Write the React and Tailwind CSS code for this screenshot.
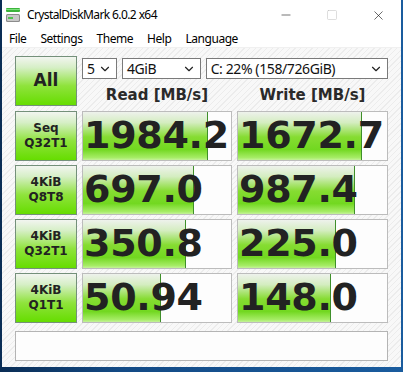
import React from 'react';
import { ChevronDown, Minus, Square, X } from 'lucide-react';

const rows = [
  { l1: 'Seq', l2: 'Q32T1', read: '1984.2', rw: 127, write: '1672.7', ww: 126 },
  { l1: '4KiB', l2: 'Q8T8', read: '697.0', rw: 113, write: '987.4', ww: 119 },
  { l1: '4KiB', l2: 'Q32T1', read: '350.8', rw: 105, write: '225.0', ww: 100 },
  { l1: '4KiB', l2: 'Q1T1', read: '50.94', rw: 80, write: '148.0', ww: 95 },
];

const ui = { fontFamily: '"Noto Sans", "Open Sans", sans-serif' };
const bold = { fontFamily: '"DejaVu Sans", Verdana, sans-serif' };

const btnBg =
  'bg-[linear-gradient(to_bottom,#f2f5f0_0%,#d6efc6_22%,#8fe33c_60%,#66dd00_100%)]';

const AppIcon = () => (
  <svg width="16" height="16" viewBox="0 0 16 16">
    <rect x="1" y="1" width="14" height="4" rx="1" fill="#3cb43c" />
    <rect x="1" y="2" width="14" height="1" fill="#7ee07e" />
    <rect x="1" y="7" width="14" height="8" rx="1.5" fill="#8c8c8c" />
    <rect x="2" y="8" width="12" height="6" rx="1" fill="#c8c8c8" />
    <rect x="3" y="10" width="5" height="2" fill="#4ec24e" />
  </svg>
);

const Select = ({ text, className }) => (
  <div
    className={`flex items-center justify-between h-[21px] border border-[#7a7a7a] bg-white pl-[4px] pr-[4px] text-[14px] tracking-[-0.4px] text-[#111] ${className}`}
    style={ui}
  >
    <span className="leading-none">{text}</span>
    <ChevronDown size={14} strokeWidth={2} color="#222" />
  </div>
);

const TestButton = ({ l1, l2 }) => (
  <div
    className={`flex flex-col items-center justify-center border border-[#74907a] ${btnBg} text-[12px] font-bold leading-[15px] text-[#222]`}
    style={bold}
  >
    <span>{l1}</span>
    <span>{l2}</span>
  </div>
);

const ValueBox = ({ value, width }) => (
  <div className="relative h-[50px] overflow-hidden border border-[#bcbcbc] bg-[#fdfdfd]">
    <div
      className="absolute left-0 top-0 bottom-0 border-r border-[#3f8f2a] bg-[linear-gradient(to_bottom,#eef2ec_0%,#d4edc0_22%,#86dc32_52%,#72d820_78%,#a6ec66_95%,#c4f29a_100%)]"
      style={{ width: width - 2 }}
    />
    <div
      className="relative pl-[1px] text-[38px] font-bold leading-[46px] tracking-[-0.3px] text-[#222] whitespace-nowrap"
      style={bold}
    >
      {value}
    </div>
  </div>
);

export default function App() {
  return (
    <div className="w-[403px] h-[372px] bg-[linear-gradient(to_right,#0a2d55,#134a85_30%,#1a5c9e)] overflow-hidden">
      <div className="ml-[2px] w-[399px] h-[367px] flex flex-col bg-white" style={ui}>
        {/* title bar */}
        <div className="h-[30px] flex items-center bg-white">
          <div className="ml-[3px] mt-[-1px]">
            <AppIcon />
          </div>
          <span className="ml-[6px] text-[12px] tracking-[-0.6px] text-black">CrystalDiskMark 6.0.2 x64</span>
          <div className="ml-auto flex items-center h-full">
            <div className="w-[46px] h-full flex items-center justify-center">
              <Minus size={14} strokeWidth={1} color="#111" />
            </div>
            <div className="w-[46px] h-full flex items-center justify-center">
              <Square size={12} strokeWidth={1} color="#bdbdbd" />
            </div>
            <div className="w-[46px] h-full flex items-center justify-center">
              <X size={15} strokeWidth={1} color="#111" />
            </div>
          </div>
        </div>

        {/* menu bar */}
        <div className="h-[17px] flex items-center text-[12px] tracking-[-0.45px] text-black">
          {['File', 'Settings', 'Theme', 'Help', 'Language'].map((m) => (
            <span key={m} className="px-[7px] leading-none">
              {m}
            </span>
          ))}
        </div>
        <div className="h-[1px] bg-[#f0f0f0]" />

        {/* content */}
        <div className="flex-1 px-[13px] pt-[8px] bg-[repeating-linear-gradient(135deg,#f8f8f8_0px,#f8f8f8_3px,#ececec_3px,#ececec_4px)]">
          <div className="grid grid-cols-[62px_150px_151px] gap-x-[5px]">
            <div className="h-[50px] flex items-center justify-center border border-[#74907a] bg-[linear-gradient(to_bottom,#f2f5f0_0%,#d6efc6_22%,#8fe33c_60%,#66dd00_100%)] text-[17px] font-bold text-[#222]" style={bold}>
              All
            </div>
            <div className="col-span-2 flex flex-col">
              <div className="flex gap-[5px] mt-[2px]">
                <Select text="5" className="w-[35px]" />
                <Select text="4GiB" className="w-[79px]" />
                <Select text="C: 22% (158/726GiB)" className="w-[183px]" />
              </div>
              <div className="flex mt-[5px] text-[15px] font-bold text-[#2a2a2a]" style={bold}>
                <div className="w-[150px] text-center">Read [MB/s]</div>
                <div className="ml-[5px] w-[151px] text-center">Write [MB/s]</div>
              </div>
            </div>
          </div>

          <div className="mt-[4px] grid grid-cols-[62px_150px_151px] gap-x-[5px] gap-y-[4px]">
            {rows.map((r) => (
              <React.Fragment key={r.l2 + r.read}>
                <TestButton l1={r.l1} l2={r.l2} />
                <ValueBox value={r.read} width={r.rw} />
                <ValueBox value={r.write} width={r.ww} />
              </React.Fragment>
            ))}
          </div>

          <div className="mt-[8px] h-[30px] w-[373px] border border-[#b4b4b4] bg-[#fdfdfd]" />
        </div>
      </div>
    </div>
  );
}
